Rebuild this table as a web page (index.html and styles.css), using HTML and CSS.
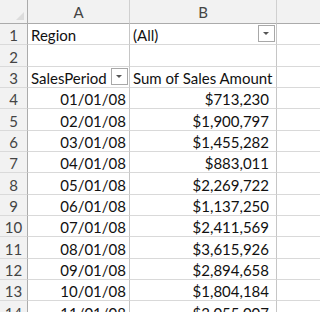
FILE: index.html
```html
<!DOCTYPE html>
<html>
<head>
<meta charset="utf-8">
<link rel="stylesheet" href="styles.css">
</head>
<body>
<div class="sheet">
  <div class="ch corner"><span class="tri"></span></div>
  <div class="ch">A</div>
  <div class="ch">B</div>
  <div class="ch last"></div>

  <div class="rh">1</div>
  <div class="c">Region</div>
  <div class="c dd-cell">(All)<span class="dd"></span></div>
  <div class="c e"></div>

  <div class="rh">2</div>
  <div class="c"></div>
  <div class="c"></div>
  <div class="c e"></div>

  <div class="rh">3</div>
  <div class="c dd-cell">SalesPeriod<span class="dd"></span></div>
  <div class="c">Sum of Sales Amount</div>
  <div class="c e"></div>

  <div class="rh">4</div><div class="c r">01/01/08</div><div class="c m">$713,230</div><div class="c e"></div>
  <div class="rh">5</div><div class="c r">02/01/08</div><div class="c m">$1,900,797</div><div class="c e"></div>
  <div class="rh">6</div><div class="c r">03/01/08</div><div class="c m">$1,455,282</div><div class="c e"></div>
  <div class="rh">7</div><div class="c r">04/01/08</div><div class="c m">$883,011</div><div class="c e"></div>
  <div class="rh">8</div><div class="c r">05/01/08</div><div class="c m">$2,269,722</div><div class="c e"></div>
  <div class="rh">9</div><div class="c r">06/01/08</div><div class="c m">$1,137,250</div><div class="c e"></div>
  <div class="rh">10</div><div class="c r">07/01/08</div><div class="c m">$2,411,569</div><div class="c e"></div>
  <div class="rh">11</div><div class="c r">08/01/08</div><div class="c m">$3,615,926</div><div class="c e"></div>
  <div class="rh">12</div><div class="c r">09/01/08</div><div class="c m">$2,894,658</div><div class="c e"></div>
  <div class="rh">13</div><div class="c r">10/01/08</div><div class="c m">$1,804,184</div><div class="c e"></div>
  <div class="rh">14</div><div class="c r">11/01/08</div><div class="c m">$3,055,007</div><div class="c e"></div>
</div>
</body>
</html>
```
FILE: styles.css
```css
html, body {
  margin: 0;
  padding: 0;
  background: #ffffff;
  overflow: hidden;
}
.sheet {
  display: grid;
  grid-template-columns: 28px 102px 147px 1fr;
  grid-template-rows: 24px;
  grid-auto-rows: 21.333px;
  width: 320px;
  font-family: "Lato", "Open Sans", sans-serif;
  font-size: 15px;
  color: #111111;
}
.ch {
  background: #f2f2f2;
  border-right: 1px solid #d0d0d0;
  border-bottom: 1px solid #ababab;
  display: flex;
  align-items: center;
  justify-content: center;
  color: #444444;
  font-size: 15px;
  position: relative;
}
.ch.last { border-right: none; }
.corner { border-right: 1px solid #ababab; }
.tri {
  position: absolute;
  right: 3px;
  bottom: 3px;
  width: 0;
  height: 0;
  border-left: 8px solid transparent;
  border-bottom: 8px solid #dcdcdc;
}
.rh {
  background: #f2f2f2;
  border-right: 1px solid #ababab;
  border-bottom: 1px solid #dadada;
  display: flex;
  align-items: flex-end;
  justify-content: center;
  padding-bottom: 0;
  color: #444444;
  font-size: 15px;
  box-sizing: border-box;
}
.c {
  border-right: 1px solid #d4d4d4;
  border-bottom: 1px solid #d9d9d9;
  display: flex;
  align-items: flex-end;
  padding: 0 3px 0 3px;
  box-sizing: border-box;
  white-space: nowrap;
  overflow: hidden;
  position: relative;
}
.c.e { border-right: none; }
.sheet > .c:nth-child(4n+2),
.sheet > .c:nth-child(4n+3) { border-right-color: #c6c6c6; }
.r { justify-content: flex-end; }
.m { justify-content: flex-end; padding-right: 7px; }
.dd {
  position: absolute;
  right: 1px;
  top: 1px;
  width: 17px;
  height: 17px;
  border: 1px solid #a8a8a8;
  background: #ffffff;
  box-sizing: border-box;
}
.dd::after {
  content: "";
  position: absolute;
  left: 4px;
  top: 6px;
  border-left: 3.5px solid transparent;
  border-right: 3.5px solid transparent;
  border-top: 3.5px solid #555555;
}
```
